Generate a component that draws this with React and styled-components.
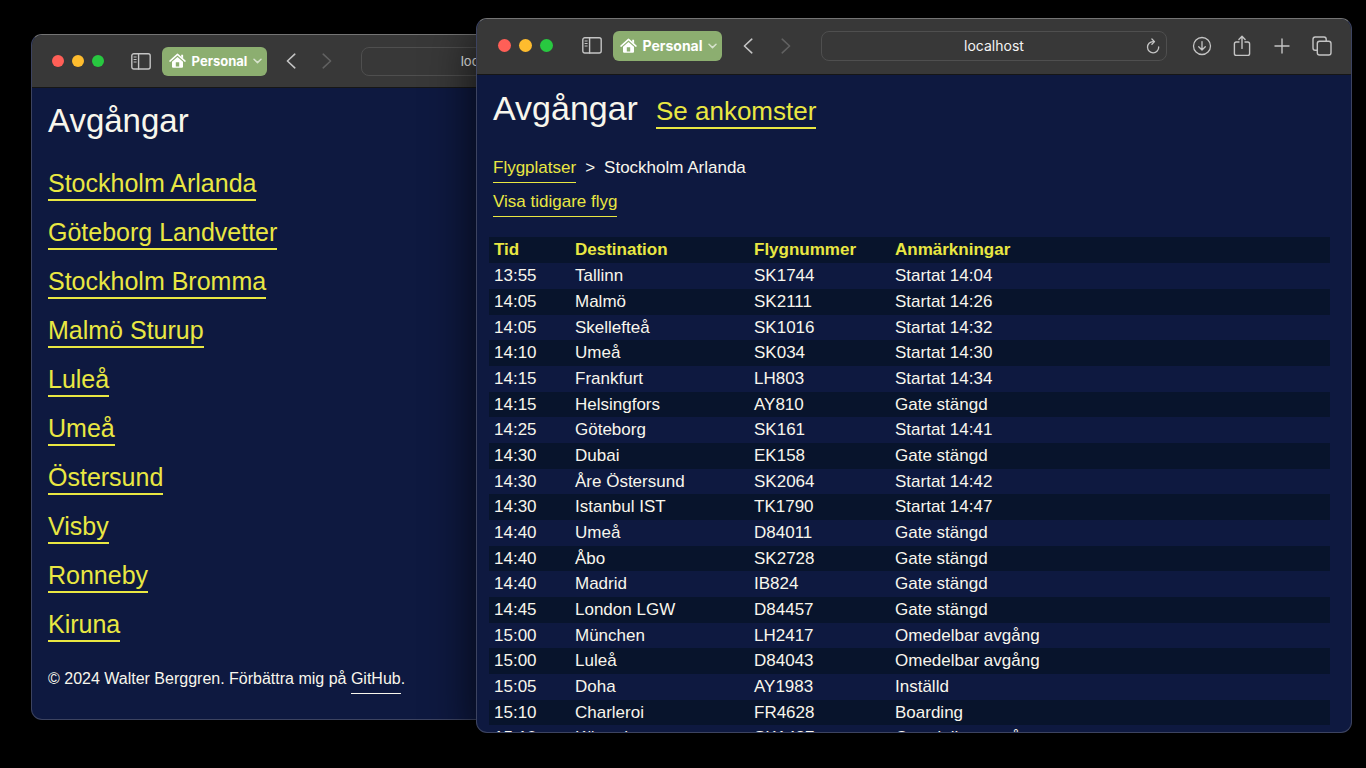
import React from "react";
import styled, { createGlobalStyle, css } from "styled-components";

const GlobalStyle = createGlobalStyle`
  *, *::before, *::after { box-sizing: border-box; }
  html, body, #root { height: 100%; }
  body {
    margin: 0;
    background: #000;
    color: #f8f6ec;
    font-family: "Liberation Sans", Arial, sans-serif;
    overflow: hidden;
  }
`;

const Desktop = styled.main`
  position: relative;
  height: 100%;
  overflow: hidden;
`;

const Window = styled.section`
  position: absolute;
  display: flex;
  flex-direction: column;
  overflow: hidden;
  border: 1px solid #3c4360;
  border-top-color: #747474;
  border-radius: 11px;
  background: #0e1940;
  ${(p) =>
    p.$front
      ? css`
          inset: 18px 14px 35px 476px;
          box-shadow: 0 12px 50px rgba(0, 0, 0, 0.75);
        `
      : css`
          inset: 34px auto 48px 31px;
          width: 56%;
        `}
`;

const Toolbar = styled.header`
  flex: none;
  display: flex;
  align-items: center;
  height: ${(p) => (p.$large ? 56 : 53)}px;
  padding: ${(p) => (p.$large ? "0 19px 2px 21px" : "0 17px 0 20px")};
  background: #383838;
  border-bottom: 1px solid #161616;
  font-family: Inter, sans-serif;
  color: #c4c4c4;
`;

const Lights = styled.div`
  display: flex;
  gap: 8px;
`;

const Light = styled.button`
  width: ${(p) => (p.$large ? 13 : 12)}px;
  height: ${(p) => (p.$large ? 13 : 12)}px;
  padding: 0;
  border: 0;
  border-radius: 50%;
  background: ${(p) => p.$color};
`;

const IconButton = styled.button`
  display: grid;
  place-items: center;
  width: ${(p) => p.$width || 20}px;
  height: 28px;
  padding: 0;
  border: 0;
  background: none;
  color: ${(p) => (p.$dim ? "#616161" : "inherit")};
`;

const SidebarButton = styled(IconButton)`
  margin: 0 11px 0 ${(p) => (p.$large ? 28 : 27)}px;
`;

const Profile = styled.button`
  display: flex;
  align-items: center;
  justify-content: space-between;
  width: ${(p) => (p.$large ? 109 : 105)}px;
  height: ${(p) => (p.$large ? 30 : 29)}px;
  padding: 0 5px 0 7px;
  border: 0;
  border-radius: 6px;
  background: #8cae70;
  color: #fff;
  font: 700 ${(p) => (p.$large ? 14 : 13)}px Inter, sans-serif;
`;

const History = styled.nav`
  display: flex;
  gap: ${(p) => (p.$large ? 18 : 16)}px;
  margin: 0 ${(p) => (p.$large ? 25 : 24)}px 0 ${(p) => (p.$large ? 16 : 14)}px;
`;

const Address = styled.div`
  flex: 1;
  display: flex;
  align-items: center;
  height: ${(p) => (p.$large ? 30 : 29)}px;
  padding: 0 3px 0 23px;
  border: 1px solid #4f4f4f;
  border-radius: 8px;
`;

const AddressInput = styled.input`
  flex: 1;
  min-width: 0;
  padding: 0;
  border: 0;
  outline: 0;
  background: none;
  color: #f4f4f4;
  text-align: center;
  font: 400 ${(p) => (p.$large ? 14 : 13)}px Inter, sans-serif;
`;

const Tools = styled.div`
  display: flex;
  gap: ${(p) => (p.$large ? 20 : 19)}px;
  margin-left: 25px;
`;

const Page = styled.div`
  flex: 1;
  min-height: 0;
  overflow: hidden;
  padding: 13px 16px 0;
`;

const Title = styled.h1`
  margin: 0;
  font-size: ${(p) => (p.$large ? 34 : 33)}px;
  line-height: 40px;
  font-weight: 400;
`;

const Link = styled.a`
  display: inline-block;
  color: #e9e742;
  text-decoration: none;
  border-bottom: 1px solid #e9e742;
  padding-bottom: 4px;
  line-height: 20px;
`;

const BigLink = styled(Link)`
  padding-bottom: 1px;
  border-bottom-width: 2px;
  font-size: ${(p) => (p.$large ? 26 : 25)}px;
  line-height: 30px;
`;

const AirportList = styled.ul`
  display: flex;
  flex-direction: column;
  align-items: flex-start;
  gap: 16px;
  margin: 27px 0;
  padding: 0;
  list-style: none;

  li { display: flex; }
`;

const Footer = styled.footer`
  font-size: 16px;
  line-height: 20px;
`;

const FooterLink = styled(Link)`
  color: inherit;
  border-bottom-color: #f8f6ec;
`;

const TitleRow = styled.div`
  display: flex;
  align-items: baseline;
  gap: 18px;
  margin-bottom: 29px;
`;

const Trail = styled.nav`
  display: flex;
  gap: 9px;
  margin-bottom: 9px;
  font-size: 17px;
  line-height: 20px;
`;

const Earlier = styled.div`
  display: flex;
  margin-bottom: 20px;
  font-size: 17px;
`;

const TableArea = styled.div`
  margin: 0 5px 0 -4px;
`;

const Table = styled.table`
  width: 100%;
  table-layout: fixed;
  border-collapse: collapse;
  font-size: 17px;
  line-height: 20px;

  tr { height: 26px; }
  tbody tr:nth-child(3n) { height: 25px; }
  th, td { padding: 0 0 0 5px; text-align: left; }
  th { color: #e9e742; font-weight: 700; }
  th:nth-child(1) { width: 81px; }
  th:nth-child(2) { width: 179px; }
  th:nth-child(3) { width: 141px; }
  thead tr, tbody tr:nth-child(even) { background: #08142c; }
`;

const airports = [
  "Stockholm Arlanda", "Göteborg Landvetter", "Stockholm Bromma", "Malmö Sturup",
  "Luleå", "Umeå", "Östersund", "Visby", "Ronneby", "Kiruna",
];

const flights = [
  ["13:55", "Tallinn", "SK1744", "Startat 14:04"],
  ["14:05", "Malmö", "SK2111", "Startat 14:26"],
  ["14:05", "Skellefteå", "SK1016", "Startat 14:32"],
  ["14:10", "Umeå", "SK034", "Startat 14:30"],
  ["14:15", "Frankfurt", "LH803", "Startat 14:34"],
  ["14:15", "Helsingfors", "AY810", "Gate stängd"],
  ["14:25", "Göteborg", "SK161", "Startat 14:41"],
  ["14:30", "Dubai", "EK158", "Gate stängd"],
  ["14:30", "Åre Östersund", "SK2064", "Startat 14:42"],
  ["14:30", "Istanbul IST", "TK1790", "Startat 14:47"],
  ["14:40", "Umeå", "D84011", "Gate stängd"],
  ["14:40", "Åbo", "SK2728", "Gate stängd"],
  ["14:40", "Madrid", "IB824", "Gate stängd"],
  ["14:45", "London LGW", "D84457", "Gate stängd"],
  ["15:00", "München", "LH2417", "Omedelbar avgång"],
  ["15:00", "Luleå", "D84043", "Omedelbar avgång"],
  ["15:05", "Doha", "AY1983", "Inställd"],
  ["15:10", "Charleroi", "FR4628", "Boarding"],
  ["15:10", "Köpenhamn", "SK1427", "Omedelbar avgång"],
];

const line = { fill: "none", stroke: "currentColor", strokeLinecap: "round", strokeLinejoin: "round" };

const SidebarIcon = () => (
  <svg width="20" height="17" viewBox="0 0 20 17" {...line} strokeWidth="1.4">
    <rect x="0.8" y="0.8" width="18.4" height="15.2" rx="2" />
    <path d="M7.6 1v15" />
    <path d="M3 4h2.2M3 6.5h2.2M3 9h2.2" strokeWidth="1" />
  </svg>
);

const HomeIcon = () => (
  <svg width="17" height="16" viewBox="0 0 17 16">
    <path d="M1 8.1 8.5 1.4 16 8.1" {...line} strokeWidth="1.5" />
    <path d="M12.2 1.8h1.9v3.7l-1.9-1.7z" fill="currentColor" />
    <path fillRule="evenodd" fill="currentColor" d="M8.5 3.9 14 8.8v4.9q0 1.1-1.1 1.1H4.1Q3 14.8 3 13.7V8.8zM6.8 9.2v4.4h3.4V9.2z" />
  </svg>
);

const ChevronDown = () => (
  <svg width="9" height="6" viewBox="0 0 9 6" {...line} strokeWidth="1.5" opacity="0.65">
    <path d="M1 1.2 4.5 4.6 8 1.2" />
  </svg>
);

const Chevron = ({ forward }) => (
  <svg width="10" height="16" viewBox="0 0 10 16" {...line} strokeWidth="1.6">
    <path d={forward ? "M1.2 1.2 8.6 8l-7.4 6.8" : "M8.8 1.2 1.4 8l7.4 6.8"} />
  </svg>
);

const ReloadIcon = () => (
  <svg width="14" height="16" viewBox="0 0 14 16" {...line} strokeWidth="1.3">
    <path d="M8 3.6H7A5.6 5.6 0 1 0 12.7 9" />
    <path d="M5.9 1 8.5 3.6 5.9 6.2" />
  </svg>
);

const DownloadIcon = () => (
  <svg width="20" height="20" viewBox="0 0 20 20" {...line} strokeWidth="1.3">
    <circle cx="10" cy="10" r="8.5" />
    <path d="M10 5.6v8.2M6.7 10.7l3.3 3.3 3.3-3.3" />
  </svg>
);

const ShareIcon = () => (
  <svg width="18" height="22" viewBox="0 0 18 22" {...line} strokeWidth="1.4">
    <path d="M6 7H3.3Q1.4 7 1.4 8.9v9.6q0 1.9 1.9 1.9h11.4q1.9 0 1.9-1.9V8.9Q16.600 7 14.700 7H12" />
    <path d="M9 13.400V1.500M5.900 4.400 9 1.300l3.100 3.100" />
  </svg>
);

const PlusIcon = () => (
  <svg width="16" height="16" viewBox="0 0 16 16" {...line} strokeWidth="1.4">
    <path d="M8 1v14M1 8h14" />
  </svg>
);

const TabsIcon = () => (
  <svg width="20" height="20" viewBox="0 0 20 20" {...line} strokeWidth="1.4">
    <rect x="5.300" y="5.300" width="13.700" height="13.700" rx="2.200" />
    <path d="M5.200 14.200H3.200Q1 14.200 1 12V3.200Q1 1 3.200 1H12q2.200 0 2.200 2.200v2" />
  </svg>
);

function BrowserBar({ large }) {
  return (
    <Toolbar $large={large}>
      <Lights>
        <Light $large={large} $color="#ff5f57" aria-label="Close" />
        <Light $large={large} $color="#febc2e" aria-label="Minimize" />
        <Light $large={large} $color="#28c840" aria-label="Zoom" />
      </Lights>
      <SidebarButton $large={large} $width={large ? 21 : 20} aria-label="Sidebar"><SidebarIcon /></SidebarButton>
      <Profile $large={large}>
        <HomeIcon />
        Personal
        <ChevronDown />
      </Profile>
      <History $large={large} aria-label="History">
        <IconButton aria-label="Back"><Chevron /></IconButton>
        <IconButton $dim disabled aria-label="Forward"><Chevron forward /></IconButton>
      </History>
      <Address $large={large}>
        <AddressInput $large={large} aria-label="Address" defaultValue="localhost" />
        <IconButton aria-label="Reload"><ReloadIcon /></IconButton>
      </Address>
      <Tools $large={large}>
        <IconButton aria-label="Downloads"><DownloadIcon /></IconButton>
        <IconButton aria-label="Share"><ShareIcon /></IconButton>
        <IconButton aria-label="New tab"><PlusIcon /></IconButton>
        <IconButton aria-label="Tab overview"><TabsIcon /></IconButton>
      </Tools>
    </Toolbar>
  );
}

export default function App() {
  return (
    <>
      <GlobalStyle />
      <Desktop>
        <Window>
          <BrowserBar />
          <Page>
            <Title>Avgångar</Title>
            <AirportList>
              {airports.map((name) => (
                <li key={name}><BigLink href="#">{name}</BigLink></li>
              ))}
            </AirportList>
            <Footer>
              © 2024 Walter Berggren. Förbättra mig på <FooterLink href="#">GitHub</FooterLink>.
            </Footer>
          </Page>
        </Window>
        <Window $front>
          <BrowserBar large />
          <Page>
            <TitleRow>
              <Title $large>Avgångar</Title>
              <BigLink $large href="#">Se ankomster</BigLink>
            </TitleRow>
            <Trail aria-label="Breadcrumb">
              <Link href="#">Flygplatser</Link>
              <span>&gt;</span>
              <span>Stockholm Arlanda</span>
            </Trail>
            <Earlier><Link href="#">Visa tidigare flyg</Link></Earlier>
            <TableArea>
              <Table>
                <thead>
                  <tr>
                    <th scope="col">Tid</th>
                    <th scope="col">Destination</th>
                    <th scope="col">Flygnummer</th>
                    <th scope="col">Anmärkningar</th>
                  </tr>
                </thead>
                <tbody>
                  {flights.map((flight) => (
                    <tr key={flight[2]}>
                      {flight.map((cell, i) => <td key={i}>{cell}</td>)}
                    </tr>
                  ))}
                </tbody>
              </Table>
            </TableArea>
          </Page>
        </Window>
      </Desktop>
    </>
  );
}
